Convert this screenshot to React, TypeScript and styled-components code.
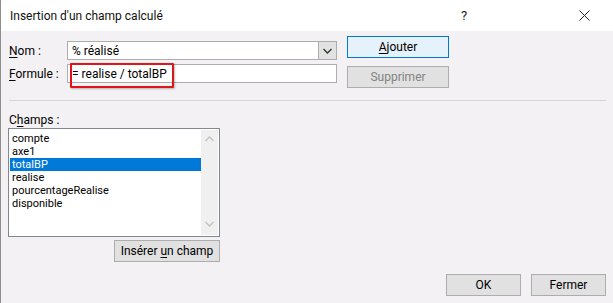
import styled, { createGlobalStyle } from 'styled-components';

const GlobalStyle = createGlobalStyle`
  html, body {
    margin: 0;
    padding: 0;
    background: #f3f1f3;
  }
  body {
    font-family: Roboto, "Noto Sans", "Liberation Sans", sans-serif;
    font-size: 12px;
    color: #000;
  }
`;

const Window = styled.div`
  width: 613px;
  height: 303px;
  box-sizing: border-box;
  border-left: 1px solid #8d8d8d;
  display: flex;
  flex-direction: column;
  background: #f3f1f3;
  overflow: hidden;
`;

const TitleBar = styled.div`
  height: 31px;
  flex-shrink: 0;
  background: #ffffff;
  display: flex;
  align-items: center;
  padding-left: 9px;
  padding-right: 22px;
`;

const Title = styled.div`
  flex: 1;
  color: #111;
`;

const TitleActions = styled.div`
  display: flex;
  align-items: center;
  gap: 106px;
`;

const TitleIcon = styled.div`
  width: 14px;
  display: flex;
  justify-content: center;
  color: #222;
  font-size: 13px;
`;

const Body = styled.div`
  flex: 1;
  display: flex;
  flex-direction: column;
  padding: 0 7px;
`;

const TopArea = styled.div`
  display: flex;
  gap: 10px;
`;

const Fields = styled.div`
  padding-top: 10px;
  display: flex;
  flex-direction: column;
  gap: 4px;
`;

const FieldRow = styled.div`
  display: flex;
  align-items: center;
`;

const Label = styled.label`
  width: 58px;
  padding-left: 1px;
  flex-shrink: 0;
  u {
    text-decoration: underline;
    text-underline-offset: 2px;
  }
`;

const InputBox = styled.div`
  position: relative;
  width: 270px;
  height: 19px;
  box-sizing: border-box;
  border: 1px solid #adadad;
  background: #ffffff;
  display: flex;
  align-items: center;
  padding-left: 4px;
`;

const ComboArrow = styled.div`
  position: absolute;
  right: 0;
  top: 0;
  bottom: 0;
  width: 17px;
  background: #e3e2e3;
  border-left: 1px solid #adadad;
  display: flex;
  align-items: center;
  justify-content: center;
`;

const Highlight = styled.div`
  position: absolute;
  left: 2px;
  top: -2px;
  width: 104px;
  height: 25px;
  box-sizing: border-box;
  border: 2px solid #e0141b;
  border-radius: 1px;
  box-shadow: 1px 1px 2px rgba(0, 0, 0, 0.25);
`;

const SideButtons = styled.div`
  padding-top: 5px;
  display: flex;
  flex-direction: column;
  gap: 8px;
`;

const Button = styled.button<{ $w: number; $variant?: 'default' | 'disabled' }>`
  width: ${({ $w }) => $w}px;
  height: 22px;
  box-sizing: border-box;
  font-family: inherit;
  font-size: 12px;
  padding: 0;
  border: 1px solid
    ${({ $variant }) => ($variant === 'default' ? '#0078d7' : '#adadad')};
  background: ${({ $variant }) =>
    $variant === 'default' ? '#e5f1fb' : '#e1e1e1'};
  color: ${({ $variant }) => ($variant === 'disabled' ? '#838383' : '#000')};
  u {
    text-decoration: underline;
    text-underline-offset: 2px;
  }
`;

const Separator = styled.div`
  margin: 12px 0 0 1px;
  height: 1px;
  background: #d5d5d5;
`;

const ChampsLabel = styled.div`
  margin-top: 12px;
  padding-left: 1px;
  u {
    text-decoration: underline;
    text-underline-offset: 2px;
  }
`;

const ListArea = styled.div`
  width: 212px;
  display: flex;
  flex-direction: column;
  align-items: flex-end;
  gap: 3px;
  margin-top: 1px;
`;

const ListBox = styled.div`
  width: 212px;
  height: 109px;
  box-sizing: border-box;
  border: 1px solid #828790;
  background: #ffffff;
  display: flex;
  padding: 1px;
`;

const Items = styled.div`
  flex: 1;
  padding-top: 2px;
`;

const Item = styled.div<{ $selected?: boolean }>`
  height: 13px;
  line-height: 13px;
  font-size: 11px;
  padding-left: 2px;
  background: ${({ $selected }) => ($selected ? '#0078d7' : 'transparent')};
  color: ${({ $selected }) => ($selected ? '#ffffff' : '#000')};
`;

const ScrollBar = styled.div`
  width: 17px;
  background: #f0f0f0;
  display: flex;
  flex-direction: column;
  justify-content: space-between;
  align-items: center;
  padding: 6px 0 8px;
`;

const Footer = styled.div`
  margin-top: auto;
  margin-bottom: 7px;
  display: flex;
  justify-content: flex-end;
  gap: 10px;
`;

const Chevron = ({ dir, color }: { dir: 'up' | 'down'; color: string }) => (
  <svg width="9" height="6" viewBox="0 0 9 6">
    <path
      d={dir === 'down' ? 'M0.5 1 L4.5 5 L8.5 1' : 'M0.5 5 L4.5 1 L8.5 5'}
      fill="none"
      stroke={color}
      strokeWidth="1.3"
    />
  </svg>
);

const fields = ['compte', 'axe1', 'totalBP', 'realise', 'pourcentageRealise', 'disponible'];

export default function App() {
  return (
    <>
      <GlobalStyle />
      <Window>
        <TitleBar>
          <Title>Insertion d'un champ calculé</Title>
          <TitleActions>
            <TitleIcon>?</TitleIcon>
            <TitleIcon>
              <svg width="11" height="11" viewBox="0 0 11 11">
                <path d="M0.5 0.5 L10.5 10.5 M10.5 0.5 L0.5 10.5" stroke="#222" strokeWidth="1" />
              </svg>
            </TitleIcon>
          </TitleActions>
        </TitleBar>
        <Body>
          <TopArea>
            <Fields>
              <FieldRow>
                <Label><u>N</u>om :</Label>
                <InputBox>
                  % réalisé
                  <ComboArrow>
                    <Chevron dir="down" color="#333" />
                  </ComboArrow>
                </InputBox>
              </FieldRow>
              <FieldRow>
                <Label><u>F</u>ormule :</Label>
                <InputBox>
                  = realise / totalBP
                  <Highlight />
                </InputBox>
              </FieldRow>
            </Fields>
            <SideButtons>
              <Button $w={102} $variant="default"><u>A</u>jouter</Button>
              <Button $w={102} $variant="disabled">Supprimer</Button>
            </SideButtons>
          </TopArea>
          <Separator />
          <ChampsLabel>C<u>h</u>amps :</ChampsLabel>
          <ListArea>
            <ListBox>
              <Items>
                {fields.map((f) => (
                  <Item key={f} $selected={f === 'totalBP'}>{f}</Item>
                ))}
              </Items>
              <ScrollBar>
                <Chevron dir="up" color="#c2c2c2" />
                <Chevron dir="down" color="#c2c2c2" />
              </ScrollBar>
            </ListBox>
            <Button $w={106}>Insérer <u>u</u>n champ</Button>
          </ListArea>
          <Footer>
            <Button $w={75}>OK</Button>
            <Button $w={75}>Fermer</Button>
          </Footer>
        </Body>
      </Window>
    </>
  );
}
